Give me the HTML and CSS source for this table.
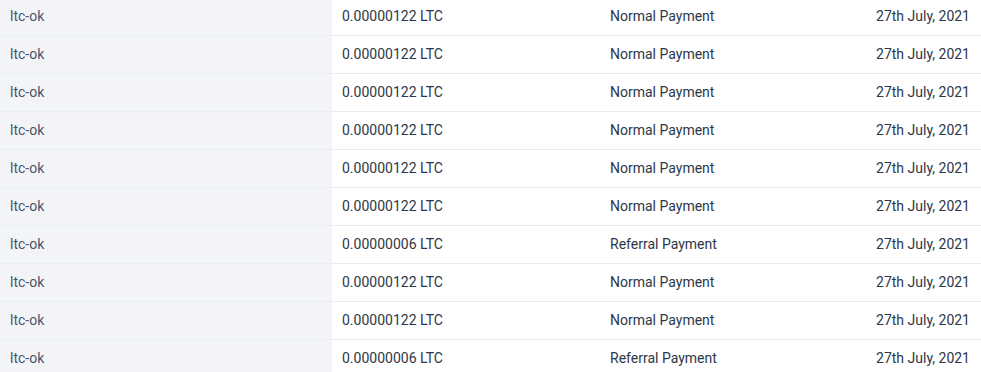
FILE: index.html
```html
<!DOCTYPE html>
<html>
<head>
<meta charset="utf-8">
<link rel="stylesheet" href="styles.css">
</head>
<body>
<div class="table">
  <div class="row"><div class="cell name">ltc-ok</div><div class="cell amt">0.00000122 LTC</div><div class="cell type">Normal Payment</div><div class="cell date">27th July, 2021</div></div>
  <div class="row"><div class="cell name">ltc-ok</div><div class="cell amt">0.00000122 LTC</div><div class="cell type">Normal Payment</div><div class="cell date">27th July, 2021</div></div>
  <div class="row"><div class="cell name">ltc-ok</div><div class="cell amt">0.00000122 LTC</div><div class="cell type">Normal Payment</div><div class="cell date">27th July, 2021</div></div>
  <div class="row"><div class="cell name">ltc-ok</div><div class="cell amt">0.00000122 LTC</div><div class="cell type">Normal Payment</div><div class="cell date">27th July, 2021</div></div>
  <div class="row"><div class="cell name">ltc-ok</div><div class="cell amt">0.00000122 LTC</div><div class="cell type">Normal Payment</div><div class="cell date">27th July, 2021</div></div>
  <div class="row"><div class="cell name">ltc-ok</div><div class="cell amt">0.00000122 LTC</div><div class="cell type">Normal Payment</div><div class="cell date">27th July, 2021</div></div>
  <div class="row"><div class="cell name">ltc-ok</div><div class="cell amt">0.00000006 LTC</div><div class="cell type">Referral Payment</div><div class="cell date">27th July, 2021</div></div>
  <div class="row"><div class="cell name">ltc-ok</div><div class="cell amt">0.00000122 LTC</div><div class="cell type">Normal Payment</div><div class="cell date">27th July, 2021</div></div>
  <div class="row"><div class="cell name">ltc-ok</div><div class="cell amt">0.00000122 LTC</div><div class="cell type">Normal Payment</div><div class="cell date">27th July, 2021</div></div>
  <div class="row"><div class="cell name">ltc-ok</div><div class="cell amt">0.00000006 LTC</div><div class="cell type">Referral Payment</div><div class="cell date">27th July, 2021</div></div>
</div>
</body>
</html>
```
FILE: styles.css
```css
html, body {
  margin: 0;
  padding: 0;
  background: #ffffff;
  overflow: hidden;
}
body {
  font-family: Roboto, "Liberation Sans", sans-serif;
  font-size: 14px;
  color: #2d3748;
}
.table {
  margin-top: -2px;
}
.row {
  display: grid;
  grid-template-columns: 332px 268px 1fr auto;
  height: 37px;
  border-bottom: 1px solid #e9edf3;
}
.cell {
  display: flex;
  align-items: center;
  padding-left: 10px;
  padding-bottom: 1px;
}
.name {
  background: #f3f4f8;
  color: #4a5568;
}
.date {
  padding-left: 0;
  padding-right: 11px;
  justify-content: flex-end;
}
```
